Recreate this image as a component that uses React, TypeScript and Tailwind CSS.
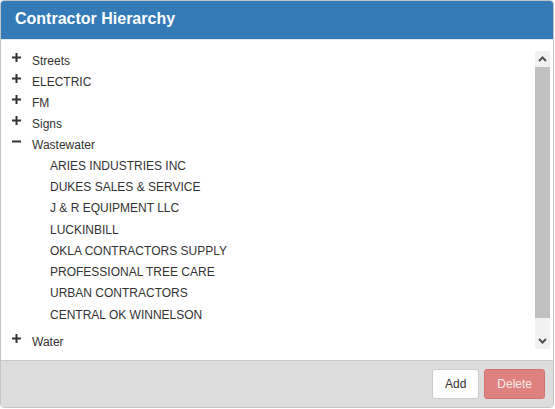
import React from "react";

const top = ["Streets", "ELECTRIC", "FM", "Signs"];
const kids = [
  "ARIES INDUSTRIES INC",
  "DUKES SALES & SERVICE",
  "J & R EQUIPMENT LLC",
  "LUCKINBILL",
  "OKLA CONTRACTORS SUPPLY",
  "PROFESSIONAL TREE CARE",
  "URBAN CONTRACTORS",
  "CENTRAL OK WINNELSON",
];

function Plus() {
  return (
    <svg width="9" height="9" viewBox="0 0 9 9" className="shrink-0">
      <path d="M4.5 0V9M0 4.5H9" stroke="#333" strokeWidth="2" />
    </svg>
  );
}
function Minus() {
  return (
    <svg width="9" height="9" viewBox="0 0 9 9" className="shrink-0">
      <path d="M0 4.5H9" stroke="#333" strokeWidth="2" />
    </svg>
  );
}

function Row({ icon, label }: { icon: React.ReactNode; label: string }) {
  return (
    <li className="flex h-[21px] items-center">
      <span className="flex w-[20px] -translate-y-[3px] items-center">{icon}</span>
      <span>{label}</span>
    </li>
  );
}

export default function App() {
  return (
    <div
      className="h-[409px] w-[555px] bg-white"
      style={{ fontFamily: '"Liberation Sans", Arial, sans-serif' }}
    >
      <div className="flex h-[408px] w-[554px] flex-col rounded-[4px] border border-[#c4c4c4] overflow-hidden">
        <div className="flex h-[38px] shrink-0 items-center bg-[#337ab7] px-[14px] pb-[2px] text-[16px] font-bold text-white">
          Contractor Hierarchy
        </div>
        <div className="flex h-[321px] shrink-0 border-t border-[#e6e6e6] bg-white pb-[9px] pl-0 pr-[3px] pt-[11px]">
          <div className="h-[298px] flex-1 overflow-hidden">
            <ul className="-mt-[1px] pl-[11px] text-[12px] text-[#333]">
              {top.map((t) => (
                <Row key={t} icon={<Plus />} label={t} />
              ))}
              <Row icon={<Minus />} label="Wastewater" />
              <li>
                <ul className="mb-[6px] pl-[38px]">
                  {kids.map((k) => (
                    <li key={k} className="flex h-[21.3px] items-center">
                      {k}
                    </li>
                  ))}
                </ul>
              </li>
              <Row icon={<Plus />} label="Water" />
            </ul>
          </div>
          <div className="flex h-[298px] w-[15px] flex-col bg-[#f1f1f1]">
            <div className="flex h-[16px] items-center justify-center">
              <svg width="9" height="6" viewBox="0 0 9 6">
                <path d="M1 5L4.5 1.5L8 5" stroke="#505050" strokeWidth="2" fill="none" />
              </svg>
            </div>
            <div className="h-[251px] w-full bg-[#c1c1c1]" />
            <div className="flex-1" />
            <div className="flex h-[16px] items-center justify-center">
              <svg width="9" height="6" viewBox="0 0 9 6">
                <path d="M1 1L4.5 4.5L8 1" stroke="#505050" strokeWidth="2" fill="none" />
              </svg>
            </div>
          </div>
        </div>
        <div className="flex flex-1 items-center justify-end gap-[5px] border-t border-[#c8c8c8] bg-[#dddddd] px-[8px]">
          <button className="h-[30px] rounded-[3px] border border-[#cccccc] bg-white px-[12px] text-[12px] text-[#333]">
            Add
          </button>
          <button className="h-[30px] rounded-[3px] border border-[#d27370] bg-[#df817e] px-[12px] text-[12px] text-[#fbeaea]">
            Delete
          </button>
        </div>
      </div>
    </div>
  );
}
